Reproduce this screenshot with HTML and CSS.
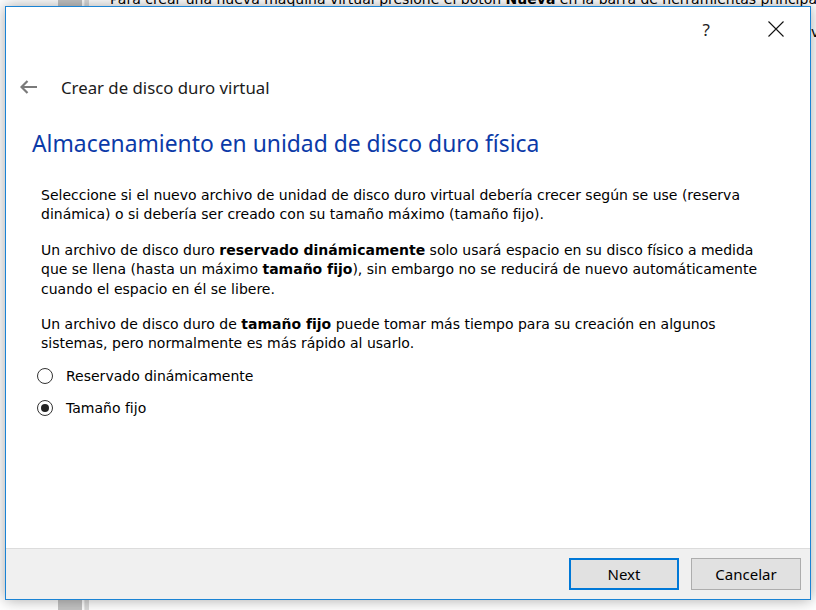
FILE: index.html
```html
<!DOCTYPE html>
<html lang="es">
<head>
<meta charset="utf-8">
<title>Crear de disco duro virtual</title>
<link rel="stylesheet" href="styles.css">
</head>
<body>
<div class="desktop">
  <div class="bgwin">
    <div class="bg-col"></div>
    <div class="bg-line"></div>
    <div class="bg-text">Para crear una nueva máquina virtual presione el botón <b>Nueva</b> en la barra de herramientas principal</div>
    <div class="bg-text2">v</div>
  </div>

  <div class="dialog">
    <div class="titlebar">
      <span class="help">?</span>
      <svg class="close" width="16" height="16" viewBox="0 0 16 16"><path d="M0.5 0.5 L15.5 15.5 M15.5 0.5 L0.5 15.5" stroke="#111" stroke-width="1.1" fill="none"/></svg>
    </div>
    <div class="nav">
      <svg class="back" width="18" height="14" viewBox="0 0 18 14"><path d="M1.5 7 H17 M7.5 1 L1.5 7 L7.5 13" stroke="#7a7a7a" stroke-width="2.2" fill="none"/></svg>
      <span class="nav-title">Crear de disco duro virtual</span>
    </div>
    <div class="body">
      <h1 class="heading">Almacenamiento en unidad de disco duro física</h1>
      <p class="para">Seleccione si el nuevo archivo de unidad de disco duro virtual debería crecer según se use (reserva<br>dinámica) o si debería ser creado con su tamaño máximo (tamaño fijo).</p>
      <p class="para">Un archivo de disco duro <b>reservado dinámicamente</b> solo usará espacio en su disco físico a medida<br>que se llena (hasta un máximo <b>tamaño fijo</b>), sin embargo no se reducirá de nuevo automáticamente<br>cuando el espacio en él se libere.</p>
      <p class="para">Un archivo de disco duro de <b>tamaño fijo</b> puede tomar más tiempo para su creación en algunos<br>sistemas, pero normalmente es más rápido al usarlo.</p>
      <div class="options">
        <label class="option"><span class="radio"></span>Reservado dinámicamente</label>
        <label class="option"><span class="radio checked"></span>Tamaño fijo</label>
      </div>
    </div>
    <div class="footer">
      <button class="btn primary">Next</button>
      <button class="btn">Cancelar</button>
    </div>
  </div>
</div>
</body>
</html>
```

FILE: styles.css
```css
html, body {
  margin: 0;
  padding: 0;
}
body {
  width: 816px;
  height: 610px;
  overflow: hidden;
  background: #ffffff;
}
.desktop {
  position: relative;
  width: 816px;
  height: 610px;
  overflow: hidden;
}
.bgwin {
  position: absolute;
  left: 0;
  top: 0;
  width: 816px;
  height: 610px;
  background: #ffffff;
}
.bg-col {
  position: absolute;
  left: 58px;
  top: 0;
  width: 24px;
  height: 610px;
  background: #c4c4c4;
}
.bg-line {
  position: absolute;
  left: 84px;
  top: 0;
  width: 4px;
  height: 610px;
  background: #dadada;
  border-left: 1px solid #e8e8e8;
}
.bg-text {
  position: absolute;
  left: 110px;
  top: -9px;
  font-family: "DejaVu Sans", sans-serif;
  font-size: 14px;
  color: #000;
  white-space: nowrap;
}
.bg-text2 {
  position: absolute;
  left: 811px;
  top: 24px;
  font-family: "DejaVu Sans", sans-serif;
  font-size: 14px;
  color: #000;
}
.dialog {
  position: absolute;
  left: 5px;
  top: 6px;
  width: 804px;
  height: 592px;
  border: 1px solid #1a83d4;
  background: #ffffff;
  box-shadow: 0 0 14px rgba(0, 0, 0, 0.35);
  display: flex;
  flex-direction: column;
}
.titlebar {
  height: 44px;
  flex: none;
  display: flex;
  align-items: center;
  justify-content: flex-end;
  gap: 58px;
  padding-right: 26px;
}
.help {
  font-family: "Noto Sans", sans-serif;
  font-size: 17px;
  color: #222;
  line-height: 1;
}
.close {
  display: block;
}
.nav {
  display: flex;
  flex: none;
  align-items: center;
  height: 30px;
  margin-top: 21px;
  padding-left: 14px;
}
.back {
  display: block;
  margin-right: 23px;
}
.nav-title {
  font-family: "Noto Sans", sans-serif;
  font-size: 16.8px;
  color: #1b1b1b;
}
.body {
  flex: 1;
  padding: 0 0 0 35px;
}
.heading {
  margin: 26px 0 0 -9px;
  font-family: "Noto Sans", sans-serif;
  font-weight: normal;
  font-size: 22.85px;
  color: #0b3aa8;
  line-height: 32px;
}
.para {
  margin: 16px 0 0 0;
  font-family: "DejaVu Sans", sans-serif;
  font-size: 14px;
  line-height: 19.4px;
  color: #000;
}
.para:first-of-type {
  margin-top: 26px;
}
.para b {
  font-weight: bold;
}
.options {
  display: flex;
  flex-direction: column;
  gap: 13px;
  margin-top: 13px;
  margin-left: -4px;
}
.option {
  display: flex;
  align-items: center;
  font-family: "DejaVu Sans", sans-serif;
  font-size: 14px;
  color: #000;
  height: 19px;
}
.radio {
  width: 16px;
  height: 16px;
  border: 1px solid #333;
  border-radius: 50%;
  box-sizing: border-box;
  margin-right: 13px;
  display: flex;
  align-items: center;
  justify-content: center;
  background: #fff;
}
.radio.checked::after {
  content: "";
  width: 8px;
  height: 8px;
  border-radius: 50%;
  background: #222;
}
.footer {
  height: 51px;
  flex: none;
  border-top: 1px solid #dcdcdc;
  background: #f0f0f0;
  display: flex;
  align-items: flex-start;
  justify-content: flex-end;
  gap: 12px;
  padding: 9px 9px 0 0;
  box-sizing: border-box;
}
.btn {
  width: 110px;
  height: 32px;
  background: #e1e1e1;
  border: 1px solid #adadad;
  font-family: "Noto Sans", sans-serif;
  font-size: 15px;
  color: #000;
  padding: 0;
}
.btn.primary {
  border: 2px solid #0078d7;
}
```
